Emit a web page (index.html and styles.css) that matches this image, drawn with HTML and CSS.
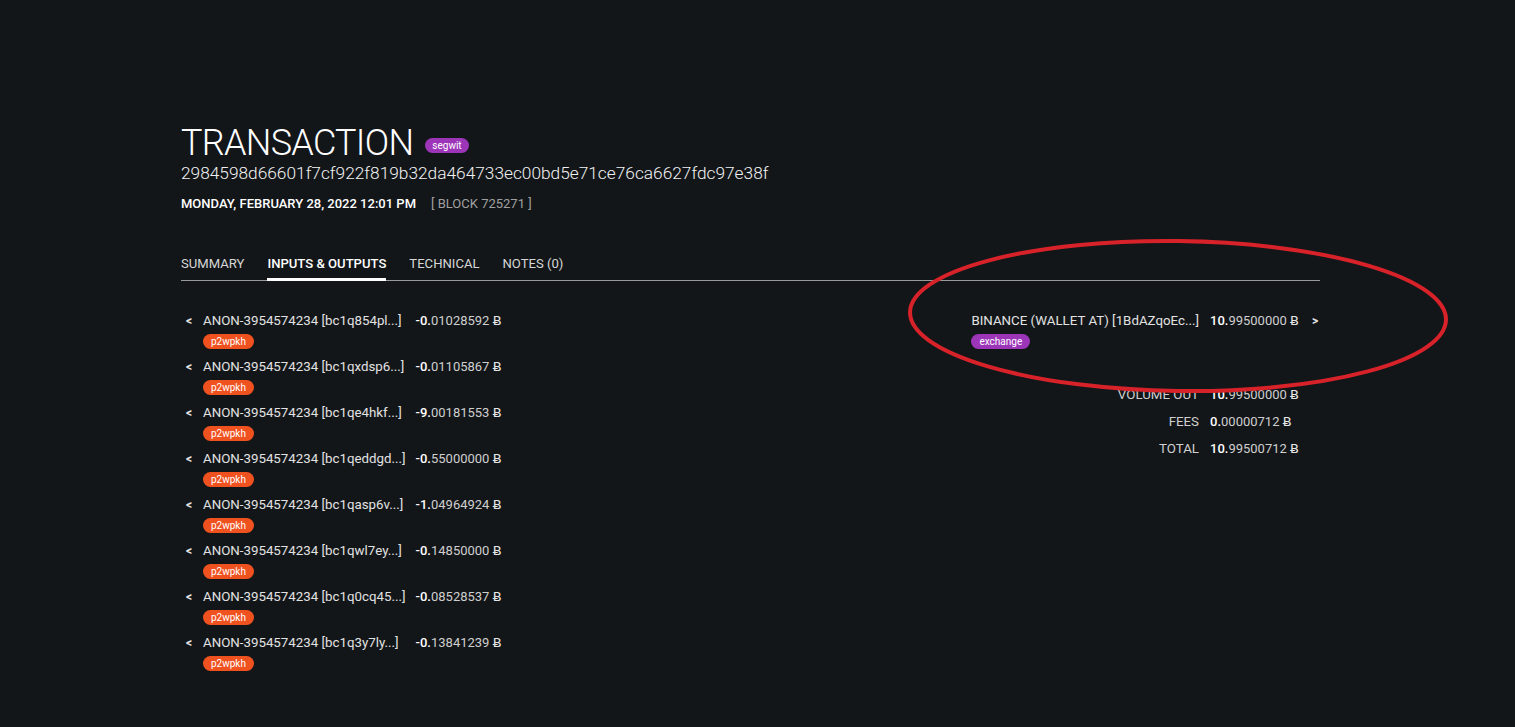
FILE: index.html
```html
<!DOCTYPE html>
<html lang="en">
<head>
<meta charset="utf-8">
<title>Transaction</title>
<link rel="stylesheet" href="styles.css">
</head>
<body>
<div class="page">
  <header class="tx-header">
    <div class="title-row">
      <h1 class="title">TRANSACTION</h1>
      <span class="badge badge-purple">segwit</span>
    </div>
    <div class="hash">2984598d66601f7cf922f819b32da464733ec00bd5e71ce76ca6627fdc97e38f</div>
    <div class="meta">
      <span class="date">MONDAY, FEBRUARY 28, 2022 12:01 PM</span>
      <span class="block">[ BLOCK 725271 ]</span>
    </div>
  </header>

  <nav class="tabs">
    <span class="tab">SUMMARY</span>
    <span class="tab active">INPUTS &amp; OUTPUTS</span>
    <span class="tab">TECHNICAL</span>
    <span class="tab">NOTES (0)</span>
  </nav>

  <section class="io">
    <div class="inputs">
      <div class="arrow">&lt;</div>
      <div class="who"><div class="name">ANON-3954574234 [bc1q854pl...]</div><span class="badge badge-orange">p2wpkh</span></div>
      <div class="amt"><b>-0.</b>01028592 <span class="btc">Ƀ</span></div>

      <div class="arrow">&lt;</div>
      <div class="who"><div class="name">ANON-3954574234 [bc1qxdsp6...]</div><span class="badge badge-orange">p2wpkh</span></div>
      <div class="amt"><b>-0.</b>01105867 <span class="btc">Ƀ</span></div>

      <div class="arrow">&lt;</div>
      <div class="who"><div class="name">ANON-3954574234 [bc1qe4hkf...]</div><span class="badge badge-orange">p2wpkh</span></div>
      <div class="amt"><b>-9.</b>00181553 <span class="btc">Ƀ</span></div>

      <div class="arrow">&lt;</div>
      <div class="who"><div class="name">ANON-3954574234 [bc1qeddgd...]</div><span class="badge badge-orange">p2wpkh</span></div>
      <div class="amt"><b>-0.</b>55000000 <span class="btc">Ƀ</span></div>

      <div class="arrow">&lt;</div>
      <div class="who"><div class="name">ANON-3954574234 [bc1qasp6v...]</div><span class="badge badge-orange">p2wpkh</span></div>
      <div class="amt"><b>-1.</b>04964924 <span class="btc">Ƀ</span></div>

      <div class="arrow">&lt;</div>
      <div class="who"><div class="name">ANON-3954574234 [bc1qwl7ey...]</div><span class="badge badge-orange">p2wpkh</span></div>
      <div class="amt"><b>-0.</b>14850000 <span class="btc">Ƀ</span></div>

      <div class="arrow">&lt;</div>
      <div class="who"><div class="name">ANON-3954574234 [bc1q0cq45...]</div><span class="badge badge-orange">p2wpkh</span></div>
      <div class="amt"><b>-0.</b>08528537 <span class="btc">Ƀ</span></div>

      <div class="arrow">&lt;</div>
      <div class="who"><div class="name">ANON-3954574234 [bc1q3y7ly...]</div><span class="badge badge-orange">p2wpkh</span></div>
      <div class="amt"><b>-0.</b>13841239 <span class="btc">Ƀ</span></div>
    </div>

    <div class="outputs">
      <div class="who"><div class="name">BINANCE (WALLET AT) [1BdAZqoEc...]</div><span class="badge badge-purple">exchange</span></div>
      <div class="amt"><b>10.</b>99500000 <span class="btc">Ƀ</span></div>
      <div class="arrow out">&gt;</div>

      <div class="label first">VOLUME OUT</div>
      <div class="amt first"><b>10.</b>99500000 <span class="btc">Ƀ</span></div>
      <div class="arrow first"></div>

      <div class="label">FEES</div>
      <div class="amt"><b>0.</b>00000712 <span class="btc">Ƀ</span></div>
      <div class="arrow"></div>

      <div class="label">TOTAL</div>
      <div class="amt"><b>10.</b>99500712 <span class="btc">Ƀ</span></div>
      <div class="arrow"></div>
    </div>
  </section>
</div>

<svg class="annotation" width="1515" height="727" viewBox="0 0 1515 727" xmlns="http://www.w3.org/2000/svg">
  <ellipse cx="1178" cy="316" rx="268" ry="75" fill="none" stroke="#d8222a" stroke-width="4" transform="rotate(0.8 1178 316)"/>
</svg>
</body>
</html>
```

FILE: styles.css
```css
html, body {
  margin: 0;
  padding: 0;
  background: #131619;
  height: 100%;
}

body {
  font-family: Roboto, "Noto Sans", "DejaVu Sans", sans-serif;
  color: #e2e2e2;
  font-size: 13.3px;
  position: relative;
  overflow: hidden;
}

.page {
  width: 1139px;
  padding: 121px 0 0 181px;
}

.title-row {
  display: flex;
  align-items: center;
  gap: 12px;
  height: 44px;
}

.title {
  margin: 0;
  font-size: 36px;
  font-weight: 300;
  color: #ffffff;
  line-height: 44px;
  letter-spacing: -0.7px;
}

.badge {
  display: inline-block;
  height: 15px;
  line-height: 15px;
  font-size: 10px;
  color: #ffffff;
  padding: 0 8px;
  border-radius: 8px;
}

.badge-purple { background: #9c35b8; }
.badge-orange { background: #f0521f; }

.title-row .badge {
  margin-top: 4px;
  padding: 0 7px;
}

.hash {
  font-size: 17.3px;
  font-weight: 300;
  color: #f2f2f2;
  line-height: 22px;
  margin-top: -3px;
}

.meta {
  margin-top: 12px;
  display: flex;
  gap: 15px;
  font-size: 13px;
  line-height: 16px;
}

.date {
  font-weight: 500;
  color: #ffffff;
}

.block {
  color: #a0a0a0;
}

.tabs {
  margin-top: 44px;
  display: flex;
  gap: 23px;
  border-bottom: 1px solid #9a9a9a;
}

.tab {
  font-size: 13.1px;
  color: #d6d6d6;
  line-height: 16px;
  padding-bottom: 6px;
  border-bottom: 3px solid transparent;
  margin-bottom: -1px;
}

.tab.active {
  font-weight: 500;
  color: #ffffff;
  border-bottom-color: #ffffff;
}

.io {
  display: flex;
  justify-content: space-between;
  align-items: flex-start;
  margin-top: 31px;
}

.inputs {
  display: grid;
  grid-template-columns: 17px auto auto;
  row-gap: 9px;
  padding-left: 5px;
  align-items: start;
}

.arrow {
  line-height: 18px;
  font-weight: 700;
  color: #e6e6e6;
  font-size: 12px;
}

.who .name {
  line-height: 18px;
  color: #e2e2e2;
}

.who .badge {
  margin-top: 4px;
}

.inputs .who {
  padding-right: 10px;
}

.amt {
  font-size: 13px;
  line-height: 18px;
  color: #cfcfcf;
  white-space: nowrap;
}

.amt b {
  font-weight: 500;
  color: #ffffff;
}

.btc {
  font-family: "DejaVu Sans", sans-serif;
  font-size: 13px;
  color: #e6e6e6;
}

.outputs {
  display: grid;
  grid-template-columns: auto auto 8px;
  column-gap: 11px;
  row-gap: 9px;
  align-items: start;
  margin-right: 2px;
}

.outputs .arrow.out {
  margin-left: 2px;
}

.label {
  text-align: right;
  line-height: 18px;
  color: #d0d0d0;
}

.first {
  margin-top: 28px;
}

.annotation {
  position: absolute;
  top: 0;
  left: 0;
  pointer-events: none;
}
```
